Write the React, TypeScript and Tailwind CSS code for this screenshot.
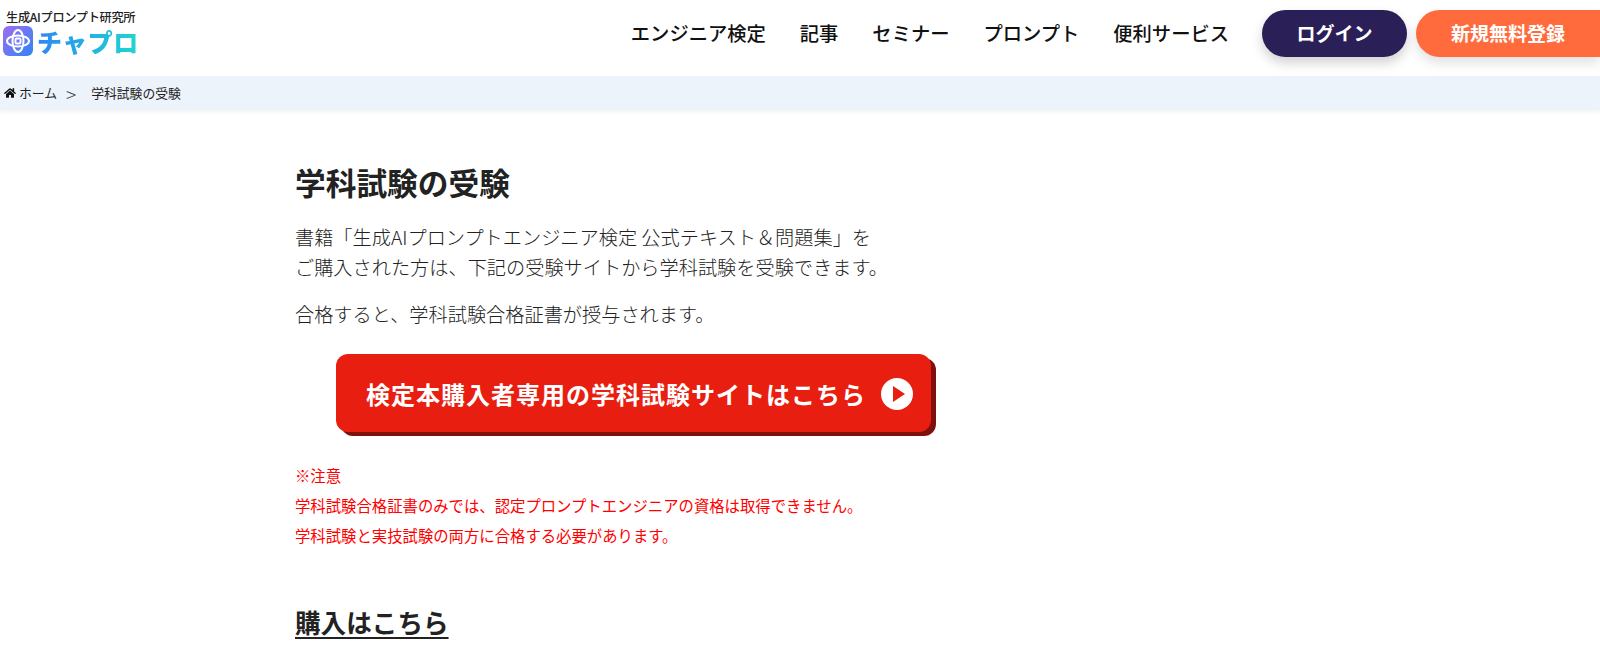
import { FaHome } from 'react-icons/fa'

const font = { fontFamily: '"Noto Sans CJK JP", "Liberation Sans", sans-serif' }

const navItems = ['エンジニア検定', '記事', 'セミナー', 'プロンプト', '便利サービス']

function LogoMark() {
  return (
    <svg width="30" height="30" viewBox="0 0 30 30" className="flex-shrink-0">
      <defs>
        <linearGradient id="mark" x1="0" y1="0" x2="1" y2="1">
          <stop offset="0" stopColor="#a06cf0" />
          <stop offset="1" stopColor="#2f86f6" />
        </linearGradient>
      </defs>
      <rect width="30" height="30" rx="6" fill="url(#mark)" />
      <g fill="none" stroke="#fff" strokeWidth="2">
        <ellipse cx="15" cy="15" rx="11" ry="5.5" />
        <ellipse cx="15" cy="15" rx="5.5" ry="11" />
        <rect x="12.5" y="12.5" width="5" height="5" rx="1" />
      </g>
    </svg>
  )
}

function Header() {
  return (
    <header className="h-[76px] flex items-start justify-between bg-white">
      <div className="pl-[3px] pt-[10px] w-[150px]">
        <div className="ml-[3px] text-[12.2px] leading-[14px] font-medium text-[#222] whitespace-nowrap tracking-[-0.3px]">生成AIプロンプト研究所</div>
        <div className="flex items-center gap-[4px] mt-[2px]">
          <LogoMark />
          <span className="text-[25px] leading-[30px] tracking-[0.5px] font-black whitespace-nowrap text-transparent bg-clip-text bg-gradient-to-r from-[#2f86f6] to-[#22d6cc]">チャプロ</span>
        </div>
      </div>
      <div className="flex items-center h-[67px]">
        <nav className="flex items-center gap-[34px] mr-[33px]">
          {navItems.map((item) => (
            <a key={item} className="text-[19.3px] font-medium text-[#111] whitespace-nowrap">{item}</a>
          ))}
        </nav>
        <a className="w-[145px] h-[47px] rounded-full bg-[#2a1f57] text-white text-[19px] font-bold flex items-center justify-center shadow-[0_6px_12px_rgba(0,0,0,0.18)]">ログイン</a>
        <a className="ml-[9px] w-[184px] h-[47px] rounded-l-full rounded-r-[24px] bg-[#ff6b3d] text-white text-[19px] font-bold flex items-center justify-center shadow-[0_6px_12px_rgba(0,0,0,0.12)]">新規無料登録</a>
      </div>
    </header>
  )
}

function Breadcrumb() {
  return (
    <div className="h-[34px] bg-[#ecf3fb] flex items-center pl-[4px] text-[12.8px] text-[#222] shadow-[0_2px_4px_rgba(0,0,0,0.06)]">
      <FaHome className="mr-[3px] text-[#111] text-[12px]" />
      <span>ホーム</span>
      <span className="mx-[9px] text-[19px] leading-none font-light text-[#444]">&gt;</span>
      <span className="ml-[6px]">学科試験の受験</span>
    </div>
  )
}

function ExamButton() {
  return (
    <a className="ml-[41px] mt-[25px] w-[595px] h-[78px] flex items-center rounded-[12px] bg-[#e81e10] shadow-[5px_4px_0_#7f100b] pl-[30px] pt-[2px]">
      <span className="text-white text-[24px] font-bold whitespace-nowrap tracking-[1px]">検定本購入者専用の学科試験サイトはこちら</span>
      <svg width="32" height="32" viewBox="0 0 32 32" className="ml-[15px] flex-shrink-0">
        <circle cx="16" cy="16" r="16" fill="#fff" />
        <path d="M12 8 24 16 12 24z" fill="#e81e10" />
      </svg>
    </a>
  )
}

export default function App() {
  return (
    <div className="h-[658px] overflow-hidden bg-white" style={font}>
      <Header />
      <Breadcrumb />
      <main className="w-[1010px] ml-[295px]">
        <h1 className="mt-[52px] text-[30.7px] leading-[40px] font-bold text-[#222]">学科試験の受験</h1>
        <p className="mt-[20px] text-[19.2px] leading-[30px] text-[#222] whitespace-nowrap font-light">
          書籍「生成AIプロンプトエンジニア検定 公式テキスト＆問題集」を<br />
          ご購入された方は、下記の受験サイトから学科試験を受験できます。
        </p>
        <p className="mt-[17px] text-[19.2px] leading-[30px] text-[#222] font-light">合格すると、学科試験合格証書が授与されます。</p>
        <ExamButton />
        <div className="mt-[28px] text-[15.36px] leading-[30px] text-[#ff0000]">
          <p>※注意</p>
          <p>学科試験合格証書のみでは、認定プロンプトエンジニアの資格は取得できません。</p>
          <p>学科試験と実技試験の両方に合格する必要があります。</p>
        </div>
        <h2 className="mt-[54px] text-[25.6px] leading-[36px] font-bold text-[#222] underline underline-offset-4">購入はこちら</h2>
      </main>
    </div>
  )
}
